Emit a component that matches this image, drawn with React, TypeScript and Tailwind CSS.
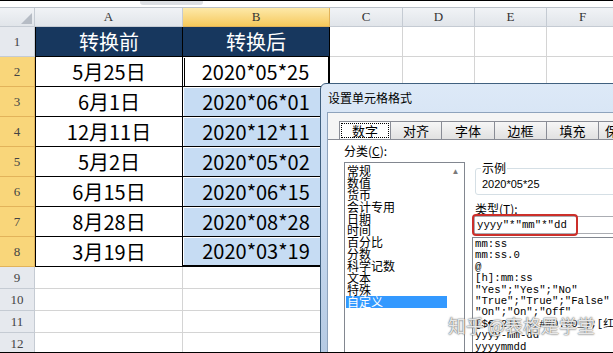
import React from 'react';

const cjk = { fontFamily: '"Noto Sans CJK SC", "Noto Sans", sans-serif' };
const serif = { fontFamily: '"Liberation Serif", "DejaVu Serif", serif' };
const mono = { fontFamily: '"Liberation Mono", "Noto Sans CJK SC", monospace' };

const data = [
  ['5月25日', '2020*05*25'],
  ['6月1日', '2020*06*01'],
  ['12月11日', '2020*12*11'],
  ['5月2日', '2020*05*02'],
  ['6月15日', '2020*06*15'],
  ['8月28日', '2020*08*28'],
  ['3月19日', '2020*03*19'],
];

const categories = ['常规', '数值', '货币', '会计专用', '日期', '时间', '百分比', '分数', '科学记数', '文本', '特殊', '自定义'];

const formats = [
  'mm:ss',
  'mm:ss.0',
  '@',
  '[h]:mm:ss',
  '"Yes";"Yes";"No"',
  '"True";"True";"False"',
  '"On";"On";"Off"',
  '[$€-2]\\ #,##0.00_);[红色]\\([$€-2]\\ #,##0.00\\)',
  'yyyy-mm-dd',
  'yyyymmdd',
];

const tabs = ['数字', '对齐', '字体', '边框', '填充', '保护'];
const tabWidths = ['w-[52px]', 'w-[52px]', 'w-[54px]', 'w-[53px]', 'w-[53px]', 'w-[40px]'];

const grid = 'border-r border-b border-[#d4d4d4]';

const ColHead: React.FC<{ label: string; active?: boolean }> = ({ label, active }) => (
  <div
    className={`flex items-center justify-center border-r border-b text-[13px] text-[#333] ${
      active
        ? 'bg-gradient-to-b from-[#fde9a8] to-[#f6c95a] border-[#e2b35a]'
        : 'bg-gradient-to-b from-[#f1f3f6] to-[#e1e5ea] border-[#c5cbd3]'
    }`}
    style={serif}
  >
    {label}
  </div>
);

const RowHead: React.FC<{ n: number; active?: boolean }> = ({ n, active }) => (
  <div
    className={`flex items-center justify-center border-r border-b text-[13px] text-[#444] ${
      active ? 'bg-[#f9d67a] border-[#e2b35a]' : 'bg-[#e6e9ee] border-[#c5cbd3]'
    }`}
    style={serif}
  >
    {n}
  </div>
);

const Sheet: React.FC = () => (
  <div className="flex flex-col">
    <div className="h-[8px] border-t border-b border-t-black border-b-[#b9c0c8] bg-white">
      <div className="ml-[140px] w-[63px] h-[4px] rounded-b-[3px] bg-[#dcdfe3]" />
    </div>
    <div className="grid grid-cols-[35px_148px_147px_73px_72px_72px_72px] grid-rows-[19px_30px_30px_30px_30px_30px_30px_30px_30px_22px_22px_22px_22px]">
      <div className="relative border-r border-b border-[#c5cbd3] bg-gradient-to-b from-[#f1f3f6] to-[#e1e5ea]">
        <svg className="absolute right-[2px] bottom-[2px]" width="11" height="11" viewBox="0 0 11 11">
          <polygon points="11,0 11,11 0,11" fill="#b6bcc5" />
        </svg>
      </div>
      {['A', 'B', 'C', 'D', 'E', 'F'].map((c) => (
        <ColHead key={c} label={c} active={c === 'B'} />
      ))}

      <RowHead n={1} />
      <div className="flex items-center justify-center bg-[#17375e] border-l border-r border-b border-black text-white text-[20px]" style={cjk}>
        转换前
      </div>
      <div className="flex items-center justify-center bg-[#17375e] border-r border-b border-black text-white text-[20px]" style={cjk}>
        转换后
      </div>
      <div className={grid} />
      <div className={grid} />
      <div className={grid} />
      <div className={grid} />

      {data.map(([a, b], i) => (
        <React.Fragment key={i}>
          <RowHead n={i + 2} active />
          <div className="flex items-center justify-center bg-white border-l border-r border-b border-black text-[20px] text-black" style={cjk}>
            {a}
          </div>
          <div
            className={`flex items-center justify-center border-b border-black text-[20px] text-black ${
              i === 0
                ? 'bg-white border-r-2 shadow-[inset_1px_1px_0_#fff,inset_2px_0_0_#000]'
                : 'bg-[#c6dcf3] border-r shadow-[inset_1px_1px_0_#fff]'
            } ${i === 6 ? 'border-b-2' : ''}`}
            style={cjk}
          >
            {b}
          </div>
          <div className={grid} />
          <div className={grid} />
          <div className={grid} />
          <div className={grid} />
        </React.Fragment>
      ))}

      {[9, 10, 11, 12].map((n) => (
        <React.Fragment key={n}>
          <RowHead n={n} />
          <div className={grid} />
          <div className={grid} />
          <div className={grid} />
          <div className={grid} />
          <div className={grid} />
          <div className={grid} />
        </React.Fragment>
      ))}
    </div>
  </div>
);

const FormatDialog: React.FC = () => (
  <div className="absolute left-[320px] top-[83px] w-[300px] h-[280px] rounded-tl-[6px] border border-[#40607f] bg-gradient-to-b from-[#dde9f7] via-[#c8daf0] to-[#b4c9e2] flex flex-col">
    <div className="h-[28px] flex items-center pl-[7px] text-[12px] text-black" style={cjk}>
      设置单元格格式
    </div>
    <div className="flex-1 ml-[6px] border-l border-t border-[#8ea3bc] bg-[#f5f5f5] flex flex-col">
      <div className="flex pt-[8px] pl-[11px] -mb-px">
        {tabs.map((t, i) => (
          <div
            key={t}
            className={`${tabWidths[i]} h-[19px] shrink-0 border border-[#898c95] text-[13px] leading-none flex ${
              i === 0 ? 'bg-white border-b-white' : 'bg-gradient-to-b from-[#f6f6f6] to-[#e1e1e1] -ml-px'
            }`}
            style={cjk}
          >
            <span
              className={`flex-1 flex items-center justify-center ${
                i === 0 ? 'm-[1px] border border-dotted border-black' : ''
              }`}
            >
              {t}
            </span>
          </div>
        ))}
      </div>
      <div className="flex-1 border-t border-[#898c95] bg-white flex">
        <div className="pl-[16px] flex flex-col">
          <div className="mt-[5px] text-[12px] leading-[12px] text-black" style={cjk}>
            分类(<span className="underline">C</span>):
          </div>
          <div className="mt-[5px] w-[121px] h-[200px] border border-[#828790] bg-white flex">
            <div className="w-[102px] pt-[2px] pl-[1px] flex flex-col">
              {categories.map((c) => (
                <div
                  key={c}
                  className={`h-[11.9px] leading-[11.9px] text-[12px] pl-[1px] whitespace-nowrap ${
                    c === '自定义' ? 'bg-[#3399ff] text-white' : 'text-black'
                  }`}
                  style={cjk}
                >
                  {c}
                </div>
              ))}
            </div>
            <div className="w-[17px] flex justify-center pt-[4px] text-[8px] leading-none text-[#7a7a7a]">▲</div>
          </div>
        </div>
        <div className="ml-[10px] flex-1 flex flex-col">
          <fieldset className="mt-[22px] h-[33px] border border-[#d5dfe5] rounded-[3px] pl-[6px]">
            <legend className="px-[1px] -ml-[1px] text-[12px] leading-[12px] text-black" style={cjk}>
              示例
            </legend>
            <div className="mt-[4px] text-[11px] leading-[12px] text-black" style={{ fontFamily: '"Liberation Sans", Arial, sans-serif' }}>
              2020*05*25
            </div>
          </fieldset>
          <div className="mt-[8px] text-[12px] leading-[12px] text-black" style={cjk}>
            类型(<span className="underline">T</span>):
          </div>
          <div className="relative mt-[1px] -ml-[1px] h-[18px] border border-[#abadb3] bg-white pl-[2px] text-[10.7px] leading-[16px] text-black whitespace-nowrap" style={mono}>
            yyyy"*"mm"*"dd
            <div className="absolute -left-[3px] -top-[3px] w-[106px] h-[22px] border-2 border-[#cc2f2a] rounded-[4px]" />
          </div>
          <div className="mt-[3px] -ml-[3px] flex-1 border-l border-t border-[#828790] bg-white pl-[2px] pt-[1px] overflow-hidden">
            {formats.map((f) => (
              <div key={f} className="h-[11.4px] leading-[11.4px] text-[10.7px] text-black whitespace-nowrap" style={mono}>
                {f}
              </div>
            ))}
          </div>
        </div>
      </div>
    </div>
  </div>
);

export default function App() {
  return (
    <div className="relative w-[613px] h-[353px] overflow-hidden bg-white border-b border-black">
      <Sheet />
      <FormatDialog />
      <div
        className="absolute left-[448px] top-[315px] text-[18px] leading-[20px] text-white/85 whitespace-nowrap [text-shadow:0_0_1px_#555,0_0_2px_#777]"
        style={cjk}
      >
        知乎 @表格是学堂
      </div>
    </div>
  );
}
